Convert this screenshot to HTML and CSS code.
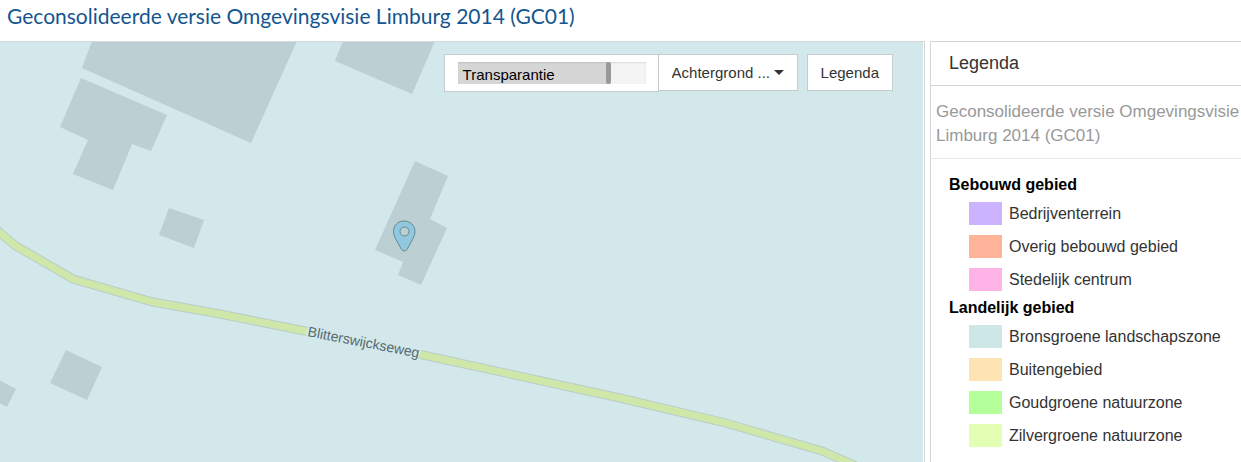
FILE: index.html
```html
<!DOCTYPE html>
<html lang="nl">
<head>
    <meta charset="UTF-8">
    <meta name="viewport" content="width=device-width, initial-scale=1.0">
    <title>Omgevingsvisie Limburg 2014</title>
    <link rel="stylesheet" href="styles.css">
</head>
<body>

<h1 class="page-title">Geconsolideerde versie Omgevingsvisie Limburg 2014 (GC01)</h1>

<div class="viewer">
    <main class="map">
        <svg class="map-canvas" role="img" aria-label="Kaart">
            <g class="buildings">
                <polygon points="92,-1 82,26 251,101 297,-1"/>
                <polygon points="81,36 167,73 151,109 132,102 113,148 73,132 88,98 60,85"/>
                <polygon points="169,166 204,178 194,206 159,193"/>
                <polygon points="343,-1 335,19 412,52 435,-1"/>
                <polygon points="415,119 448,134 430,177 447,186 421,243 398,233 403,220 375,208"/>
                <polygon points="66,308 102,325 87,358 50,341"/>
                <polygon points="-1,338 16,347 7,365 -1,361"/>
            </g>
            <polyline class="road-casing" points="-10,180 0,191 16,204 73,237 153,260 220,272 305,289 423,313 620,356 722,380 822,409 870,430"/>
            <polyline class="road" points="-10,180 0,191 16,204 73,237 153,260 220,272 305,289 423,313 620,356 722,380 822,409 870,430"/>
            <text class="road-name" transform="translate(307 294) rotate(11)">Blitterswijckseweg</text>
            <path class="pin" fill-rule="evenodd" d="M404 179c-6 0-10.500 4.500-10.500 10.500 0 3 1 5 2.500 8l5.500 10c1.500 2 4 2 5.500 0l5.500-10c1.500-3 2.500-5 2.500-8 0-6-5-10.500-11-10.500zM404.500 185a4.500 4.500 0 1 1 0 9a4.500 4.500 0 1 1 0-9z"/>
        </svg>

        <div class="toolbar">
            <div class="slider-box">
                <div class="slider">
                    <input type="range" id="transparency" min="0" max="100" value="81">
                    <label for="transparency">Transparantie</label>
                </div>
            </div>
            <div class="select-box">
                <select aria-label="Achtergrond">
                    <option>Achtergrond ...</option>
                </select>
                <svg class="caret" width="10" height="5" viewBox="0 0 10 5" aria-hidden="true"><path d="M0 0h10L5 5z"/></svg>
            </div>
            <button type="button" class="legend-btn">Legenda</button>
        </div>
    </main>

    <aside class="legend">
        <h2 class="legend-head">Legenda</h2>
        <p class="legend-plan">Geconsolideerde versie Omgevingsvisie Limburg 2014 (GC01)</p>
        <div class="legend-groups">
            <h3>Bebouwd gebied</h3>
            <ul>
                <li><span class="swatch bedrijven"></span>Bedrijventerrein</li>
                <li><span class="swatch overig"></span>Overig bebouwd gebied</li>
                <li><span class="swatch stedelijk"></span>Stedelijk centrum</li>
            </ul>
            <h3>Landelijk gebied</h3>
            <ul>
                <li><span class="swatch brons"></span>Bronsgroene landschapszone</li>
                <li><span class="swatch buiten"></span>Buitengebied</li>
                <li><span class="swatch goud"></span>Goudgroene natuurzone</li>
                <li><span class="swatch zilver"></span>Zilvergroene natuurzone</li>
            </ul>
        </div>
    </aside>
</div>

</body>
</html>
```

FILE: styles.css
```css
* {
    box-sizing: border-box;
}

body {
    margin: 0;
    min-height: 100vh;
    display: flex;
    flex-direction: column;
    font-family: "Liberation Sans", Arial, sans-serif;
    font-size: 16px;
    color: #333;
    background-color: white;
}

.page-title {
    margin: 0;
    padding: 4px 7px 13px;
    font-family: Lato, sans-serif;
    font-size: 21px;
    font-weight: normal;
    line-height: 24px;
    color: #14568f;
}

.viewer {
    flex: 1;
    display: grid;
    grid-template-columns: minmax(0, 1fr) 311px;
    column-gap: 5px;
}

/* map */
.map {
    position: relative;
    overflow: hidden;
    border-top: 1px solid #d3d8d8;
    border-right: 1px solid #d3d6d6;
    padding-right: 1px;
}

.map-canvas {
    display: block;
    width: 100%;
    height: 100%;
    background-color: #d3e8ea;
}

.buildings {
    fill: #bccfd2;
}

.road-casing {
    fill: none;
    stroke: #b9cdc8;
    stroke-width: 9px;
}

.road {
    fill: none;
    stroke: #d0e7aa;
    stroke-width: 7px;
}

.road-name {
    font-size: 14px;
    fill: #566a70;
    stroke: #d3e8ea;
    stroke-width: 4px;
    stroke-linejoin: round;
    paint-order: stroke;
}

.pin {
    fill: #91c8df;
    stroke: #64898f;
    stroke-width: 1px;
}

/* controls over the map */
.toolbar {
    position: absolute;
    top: 12px;
    right: 31px;
    display: flex;
    align-items: flex-start;
    font-size: 15px;
}

.slider-box,
.select-box select,
.legend-btn {
    height: 37px;
    border: 1px solid #c5cccd;
    background-color: white;
}

.slider-box {
    width: 215px;
    height: 38px;
    padding: 7px 12px 7px 13px;
}

.slider {
    position: relative;
    height: 22px;
}

.slider input {
    display: block;
    width: 100%;
    height: 22px;
    margin: 0;
    appearance: none;
    background: linear-gradient(to right, #d6d6d6 80%, #f4f4f4 80%);
    box-shadow: inset 0 1px 2px rgba(0, 0, 0, 0.1);
}

.slider input::-webkit-slider-thumb {
    appearance: none;
    width: 5px;
    height: 22px;
    border-radius: 2px;
    background-color: #999;
}

.slider label {
    position: absolute;
    top: 0;
    left: 5px;
    line-height: 26px;
    color: black;
    pointer-events: none;
}

.select-box {
    position: relative;
    margin-left: -1px;
}

.select-box select {
    display: block;
    width: 140px;
    padding: 0 24px 0 13px;
    appearance: none;
    border-radius: 0;
    font: inherit;
    color: #333;
}

.caret {
    position: absolute;
    top: 16px;
    right: 14px;
    fill: #333;
    pointer-events: none;
}

.legend-btn {
    margin-left: 9px;
    padding: 0 13px;
    font: inherit;
    color: #333;
}

/* legend */
.legend {
    border-top: 1px solid #d3d6d6;
    border-left: 1px solid #d3d6d6;
}

.legend-head {
    margin: 0;
    padding: 0 18px;
    border-bottom: 1px solid #d3d6d6;
    font-size: 18px;
    font-weight: normal;
    line-height: 43px;
}

.legend-plan {
    margin: 0;
    padding: 14px 0 10px 5px;
    border-bottom: 1px solid #eaeaea;
    font-size: 17px;
    line-height: 24px;
    color: #999;
}

.legend-groups {
    padding: 14px 18px 0;
}

.legend-groups h3 {
    margin: 0;
    font-size: 16px;
    line-height: 24px;
    color: black;
}

.legend-groups ul {
    margin: 0;
    padding: 0 0 0 20px;
    list-style: none;
}

.legend-groups li {
    display: flex;
    align-items: center;
    gap: 7px;
    height: 33px;
    white-space: nowrap;
}

.swatch {
    width: 33px;
    height: 23px;
}

.bedrijven {
    background-color: #ccb3ff;
}

.overig {
    background-color: #ffb399;
}

.stedelijk {
    background-color: #ffb3e6;
}

.brons {
    background-color: #cde6e6;
}

.buiten {
    background-color: #ffe4b3;
}

.goud {
    background-color: #b3ff99;
}

.zilver {
    background-color: #e3ffb3;
}
```
